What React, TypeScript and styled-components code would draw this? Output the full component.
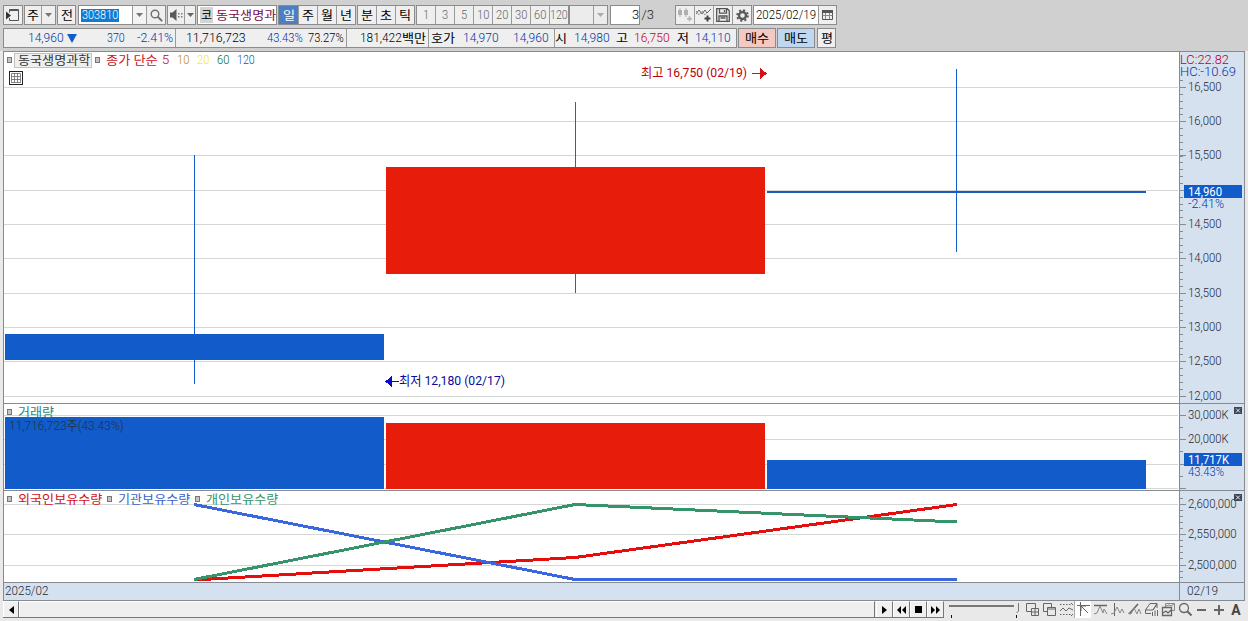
import React, { useLayoutEffect, useRef, useState } from 'react';
import styled, { createGlobalStyle } from 'styled-components';

const FONT = `Roboto, "Noto Sans CJK KR", sans-serif`;
const HANGUL = `"Noto Sans CJK KR", sans-serif`;
const BLUE = '#115bcb';
const RED = '#e81c0a';

const Global = createGlobalStyle`
  * { box-sizing: border-box; }
  body { margin: 0; background: #e9e9e9; overflow: hidden; font-family: ${FONT}; font-size: 13px; font-weight: 350; color: #000; }
  svg { display: block; flex: none; }
`;

/* ---------- text set to a fixed column width ---------- */
const FitBox = styled.span<{ $w: number; $gap: number; $color?: string; $size: number; $ko?: boolean }>`
  display: block;
  flex: none;
  width: ${p => p.$w}px;
  margin-left: ${p => p.$gap}px;
  color: ${p => p.$color ?? 'inherit'};
  font-family: ${p => (p.$ko ? HANGUL : FONT)};
  font-size: ${p => p.$size}px;
  font-weight: ${p => (p.$ko ? 400 : 350)};
  line-height: 16px;
  white-space: nowrap;
`;
const FitInner = styled.span`
  display: inline-block;
  height: 16px;
  vertical-align: top;
  transform-origin: 0 50%;
`;
type FitProps = { w: number; gap?: number; color?: string; size?: number; ko?: boolean; children: string };
function Fit({ w, gap = 0, color, size, ko, children }: FitProps) {
  const ref = useRef<HTMLSpanElement>(null);
  const [scale, setScale] = useState(1);
  useLayoutEffect(() => {
    if (ref.current) setScale(w / ref.current.offsetWidth);
  }, [w, children]);
  return (
    <FitBox $w={w} $gap={gap} $color={color} $ko={ko} $size={size ?? (ko ? 12 : 13)}>
      <FitInner ref={ref} style={{ transform: `scaleX(${scale})` }}>{children}</FitInner>
    </FitBox>
  );
}

/* ---------- page ---------- */
const Page = styled.div`
  width: 1248px;
  height: 621px;
  display: flex;
  flex-direction: column;
  background: #e9e9e9;
`;
const Header = styled.header`
  height: 51px;
  flex: none;
  padding: 5px 0 0 3px;
  background: #d0d0d0;
  display: flex;
  flex-direction: column;
  gap: 3px;
`;
const Bar = styled.div`
  display: flex;
  height: 20px;
`;
const Group = styled.div<{ $gap?: number }>`
  display: flex;
  margin-left: ${p => p.$gap ?? 1}px;
  border: 1px solid #8c8c8c;
  background: #efefef;
  height: 20px;
`;
const Cell = styled.div<{ $w: number; $bg?: string; $color?: string; $line?: boolean; $align?: string }>`
  width: ${p => p.$w}px;
  flex: none;
  height: 18px;
  display: flex;
  align-items: center;
  justify-content: ${p => p.$align ?? 'center'};
  background: ${p => p.$bg ?? 'transparent'};
  color: ${p => p.$color ?? 'inherit'};
  border-left: ${p => (p.$line ? '1px solid #9a9a9a' : '0')};
  overflow: hidden;
`;
const PageTotal = styled.div`
  width: 15px;
  height: 20px;
  display: flex;
  align-items: center;
  justify-content: center;
`;
const CodeTag = styled.span`
  display: flex;
  justify-content: center;
  width: 13px;
  height: 16px;
  margin-left: 2px;
  background: #d4d4d4;
`;
const Selected = styled.span`
  display: flex;
  align-items: center;
  height: 13px;
  width: 38px;
  background: #0f7bd6;
  margin-left: 2px;
`;

const Caret = ({ color = '#777' }: { color?: string }) => (
  <svg width="7" height="4"><path d="M0 0h7L3.5 4z" fill={color} /></svg>
);

/* ---------- toolbar icons ---------- */
const WindowIcon = () => (
  <svg width="14" height="14" fill="none" stroke="#555">
    <path d="M3.5 1.5h9v11h-9M3.5 1.5v3M3.5 10v2.5" /><path d="M3.5 2.5h9" />
    <path d="M0 3.5l5 4-5 4z" fill="#333" stroke="none" />
  </svg>
);
const SearchIcon = () => (
  <svg width="13" height="13" viewBox="0 0 13 13" fill="none" stroke="#707070" strokeWidth="1.4">
    <circle cx="5" cy="5" r="3.8" /><path d="M7.8 7.8l4.3 4.3" strokeWidth="2" />
  </svg>
);
const SpeakerIcon = () => (
  <svg width="13" height="12">
    <path d="M0 3.500h2.500L6.500 0v12L2.500 8.500H0z" fill="#5a5a5a" />
    <path d="M8 4h1.500v1.500H8zM11 4h1.500v1.500H11zM8 7h1.500v1.500H8zM11 7h1.500v1.500H11z" fill="#777" />
  </svg>
);
const CandlesAddIcon = () => (
  <svg width="16" height="14" fill="#b0b0b0">
    <path d="M1 2h4v5H1zM2.500 0h1v9h-1zM7 2h4v5H7zM8.500 0h1v9h-1zM10 10h5v1.6h-5zM11.7 8.3h1.6v5h-1.6z" />
  </svg>
);
const LineAddIcon = () => (
  <svg width="16" height="14" fill="none" stroke="#666">
    <path d="M0 6l3-4 3 4 3-4 2 3 4-4" /><path d="M0 3l3 4 3-4 3 4 3-3" strokeDasharray="1 1" />
    <path d="M8.5 10.5h6M11.5 7.5v6" strokeWidth="2" stroke="#444" />
  </svg>
);
const SaveIcon = () => (
  <svg width="14" height="14" fill="none" stroke="#555" strokeWidth="1.3">
    <path d="M.7.7h10.5l2.1 2.1v10.5H.7zM3.5.7v4.5h7V.7M3 13.3V8h8v5.3M8.5 2v2M4.5 10h5" />
  </svg>
);
const GearIcon = () => (
  <svg width="13" height="13" fill="none" stroke="#5a5a5a">
    <circle cx="6.5" cy="6.5" r="3.5" strokeWidth="2.4" />
    <circle cx="6.5" cy="6.5" r="5.4" strokeWidth="1.8" strokeDasharray="2.1 2.14" />
  </svg>
);
const CalendarIcon = () => (
  <svg width="11" height="10" fill="none" stroke="#555">
    <path d="M.5.5h10v9H.5z" /><path d="M.5 5.500h10M3.500 2v7M7.500 2v7" stroke="#888" /><path d="M0 1.500h11" strokeWidth="3" />
  </svg>
);

const periods: [string, boolean][] = [['일', true], ['주', false], ['월', false], ['년', false]];
const units = ['분', '초', '틱'];
const steps: [string, number][] = [['1', 18], ['3', 19], ['5', 19], ['10', 19], ['20', 19], ['30', 19], ['60', 19], ['120', 19]];

function Toolbar() {
  return (
    <Bar>
      <Group $gap={0}><Cell $w={18}><WindowIcon /></Cell></Group>
      <Group $gap={1}>
        <Cell $w={16}><Fit w={12} ko>주</Fit></Cell>
        <Cell $w={14} $line><Caret /></Cell>
      </Group>
      <Group $gap={1}><Cell $w={17}><Fit w={12} ko>전</Fit></Cell></Group>
      <Group $gap={2}>
        <Cell $w={53} $bg="#fff" $align="flex-start">
          <Selected><Fit w={36} gap={1} color="#fff">303810</Fit></Selected>
        </Cell>
        <Cell $w={14} $line $bg="#f4f4f4"><Caret /></Cell>
        <Cell $w={19} $line><SearchIcon /></Cell>
      </Group>
      <Group $gap={1}>
        <Cell $w={16}><SpeakerIcon /></Cell>
        <Cell $w={11} $line><Caret color="#666" /></Cell>
      </Group>
      <Group $gap={1}>
        <Cell $w={78} $bg="#fff" $align="flex-start">
          <CodeTag><Fit w={11} ko>코</Fit></CodeTag>
          <Fit w={60} gap={3} ko color="#7a0a44">동국생명과</Fit>
        </Cell>
      </Group>
      <Group $gap={1}>
        {periods.map(([t, on], i) => (
          <Cell key={t} $w={19} $line={i > 0} $bg={on ? '#4a7fc4' : undefined} $color={on ? '#fff' : undefined}>
            <Fit w={12} ko>{t}</Fit>
          </Cell>
        ))}
      </Group>
      <Group $gap={1}>
        {units.map((t, i) => <Cell key={t} $w={i ? 19 : 18} $line={i > 0}><Fit w={12} ko>{t}</Fit></Cell>)}
      </Group>
      <Group $gap={1}>
        {steps.map(([t, w], i) => (
          <Cell key={t} $w={w} $line={i > 0} $color="#666"><Fit w={t.length * 6}>{t}</Fit></Cell>
        ))}
      </Group>
      <Group $gap={0}>
        <Cell $w={23} $bg="#ececec" /><Cell $w={14} $line $bg="#ececec"><Caret color="#aaa" /></Cell>
      </Group>
      <Group $gap={2}>
        <Cell $w={28} $bg="#fff" $align="flex-end"><Fit w={7}>3</Fit></Cell>
      </Group>
      <PageTotal><Fit w={12} color="#222">/3</Fit></PageTotal>
      <Group $gap={20}>
        <Cell $w={18}><CandlesAddIcon /></Cell>
        <Cell $w={19} $line><LineAddIcon /></Cell>
        <Cell $w={19} $line><SaveIcon /></Cell>
        <Cell $w={19} $line><GearIcon /></Cell>
      </Group>
      <Group $gap={1}>
        <Cell $w={64} $bg="#fff"><Fit w={60}>2025/02/19</Fit></Cell>
        <Cell $w={18} $line><CalendarIcon /></Cell>
      </Group>
    </Bar>
  );
}

const QBLUE = '#0235a8';
function QuoteBar() {
  return (
    <Bar>
      <Group $gap={0}>
        <Cell $w={171} $align="flex-start" $color={QBLUE}>
          <Fit w={36} gap={24}>14,960</Fit>
          <svg width="13" height="9"><path d="M3 0h10L8 9z" fill={BLUE} /></svg>
          <Fit w={18} gap={30}>370</Fit>
          <Fit w={36} gap={12}>-2.41%</Fit>
        </Cell>
        <Cell $w={171} $line $align="flex-start">
          <Fit w={60} gap={10}>11,716,723</Fit>
          <Fit w={36} gap={21} color={QBLUE}>43.43%</Fit>
          <Fit w={36} gap={5}>73.27%</Fit>
        </Cell>
        <Cell $w={82} $line $align="flex-start">
          <Fit w={42} gap={13}>181,422</Fit><Fit w={24} ko>백만</Fit>
        </Cell>
        <Cell $w={126} $line $align="flex-start">
          <Fit w={24} gap={2} ko>호가</Fit>
          <Fit w={36} gap={8} color={QBLUE}>14,970</Fit>
          <Fit w={36} gap={14} color={QBLUE}>14,960</Fit>
        </Cell>
        <Cell $w={182} $line $align="flex-start" $color={QBLUE}>
          <Fit w={12} gap={0} ko color="#000">시</Fit>
          <Fit w={36} gap={7}>14,980</Fit>
          <Fit w={12} gap={6} ko color="#000">고</Fit>
          <Fit w={36} gap={6} color="#c00008">16,750</Fit>
          <Fit w={12} gap={7} ko color="#000">저</Fit>
          <Fit w={36} gap={6}>14,110</Fit>
        </Cell>
      </Group>
      <Group $gap={1}><Cell $w={36} $bg="#f3c9c3"><Fit w={24} ko>매수</Fit></Cell></Group>
      <Group $gap={1}><Cell $w={36} $bg="#bfd7f1"><Fit w={24} ko>매도</Fit></Cell></Group>
      <Group $gap={2}><Cell $w={17}><Fit w={12} ko>평</Fit></Cell></Group>
    </Bar>
  );
}

/* ---------- chart ---------- */
const Chart = styled.main`
  width: 1242px;
  margin-left: 3px;
  flex: none;
  border: 1px solid #858b90;
  border-bottom-width: 0;
  display: flex;
  flex-direction: column;
`;
const Panel = styled.section<{ $h: number }>`
  position: relative;
  display: flex;
  height: ${p => p.$h}px;
  border-bottom: 1px solid #858b90;
`;
const Plot = styled.div`
  width: 1175px;
  background: #fff;
`;
const Axis = styled.div`
  width: 65px;
  background: #d6e1ef;
  border-left: 1px solid #858b90;
`;
const Legend = styled.div`
  position: absolute;
  left: 3px;
  top: 0;
  display: flex;
  align-items: center;
  height: 16px;
`;
const Mark = styled.i<{ $gap?: number }>`
  width: 5px;
  height: 6px;
  margin-left: ${p => p.$gap ?? 0}px;
  border: 1px solid #777;
  background: #c4c4c4;
`;
const NameTag = styled.div`
  display: flex;
  align-items: center;
  width: 78px;
  height: 15px;
  margin-left: 2px;
  border: 1px solid #c2c2c2;
  background: #efefef;
`;
const GridButton = styled.div`
  position: absolute;
  left: 5px;
  top: 19px;
  width: 14px;
  height: 14px;
  border: 1px solid #222;
  background: #fff;
  display: flex;
  align-items: center;
  justify-content: center;
`;
const VolumeNote = styled.div`
  position: absolute;
  left: 5px;
  top: 14px;
`;

type Tick = { y: number; label?: string };
type AxisProps = { h: number; top: number; ticks: Tick[]; minors: number[]; last?: { y: number; text: string; pct: string; w: number }; close?: number; children?: React.ReactNode };
const widthOf = (s: string) => [...s].reduce((n, c) => n + (c === ',' ? 3 : c === 'K' ? 7 : 6.1), 0);

function SvgText({ x, y, w, color = '#222932', weight = 350, children }: { x: number; y: number; w: number; color?: string; weight?: number; children: string }) {
  return <text x={x} y={y} fill={color} fontFamily={FONT} fontSize="13" fontWeight={weight} textLength={w} lengthAdjust="spacingAndGlyphs">{children}</text>;
}
function Scale({ h, top, ticks, minors, last, close, children }: AxisProps) {
  return (
    <Axis>
      <svg width="64" height={h} viewBox={`1180 ${top} 64 ${h}`}>
        {minors.map(y => <path key={y} d={`M1180 ${y + 0.5}h3`} stroke="#858b90" />)}
        {ticks.map(t => (
          <g key={t.y}>
            <path d={`M1180 ${t.y + 0.5}h6`} stroke="#858b90" />
            {t.label && <SvgText x={1188} y={t.y + 4} w={widthOf(t.label)}>{t.label}</SvgText>}
          </g>
        ))}
        {last && (
          <g>
            <rect x="1184" y={last.y} width="58" height="13" fill={BLUE} />
            <SvgText x={1188} y={last.y + 11} w={last.w} color="#fff" weight={400}>{last.text}</SvgText>
            <SvgText x={1188} y={last.y + 23} w={36} color="#0235a8">{last.pct}</SvgText>
          </g>
        )}
        {close && (
          <g>
            <rect x="1234" y={close} width="8" height="7" fill="#3d4550" />
            <path d={`M1236 ${close + 1.5}l4 4m0-4l-4 4`} stroke="#e8eef5" />
          </g>
        )}
        {children}
      </svg>
    </Axis>
  );
}
const Lines = ({ ys }: { ys: number[] }) => (
  <>{ys.map(y => <path key={y} d={`M4 ${y + 0.5}h1174`} stroke="#d4d8d4" />)}</>
);

const priceYs = [87, 121, 155, 190, 224, 258, 293, 327, 361, 396];
const priceTicks = priceYs.map((y, i) => ({ y, label: `${(16500 - i * 500).toLocaleString('en-US')}` }));
const priceMinors = Array.from({ length: 50 }, (_, i) => Math.round(59.5 + i * 6.86)).filter(y => y > 78 && y < 400);

function PricePanel() {
  return (
    <Panel $h={352}>
      <Plot>
        <svg width="1175" height="351" viewBox="4 52 1175 351" shapeRendering="crispEdges">
          <Lines ys={priceYs} />
          <rect x="194" y="155" width="1" height="229" fill={BLUE} />
          <rect x="5" y="334" width="379" height="26" fill={BLUE} />
          <rect x="575" y="102" width="1" height="191" fill="#cf2a1c" />
          <rect x="386" y="167" width="379" height="107" fill={RED} />
          <rect x="956" y="69" width="1" height="183" fill={BLUE} />
          <rect x="767" y="191" width="379" height="2" fill="#1f5abb" />
          <SvgText x={641} y={77} w={106} color="#c00008" weight={400}>최고 16,750 (02/19)</SvgText>
          <path d="M752 73h8v-5l7 5.500-7 5.500v-5h-8z" fill="#d80f12" />
          <SvgText x={399} y={385} w={106} color="#0a0a9c" weight={400}>최저 12,180 (02/17)</SvgText>
          <path d="M399 381h-7v-5l-7 5.500 7 5.500v-5h7z" fill="#0a0ad0" />
        </svg>
      </Plot>
      <Scale h={351} top={52} ticks={priceTicks} minors={priceMinors} last={{ y: 185, text: '14,960', pct: '-2.41%', w: 34 }}>
        <SvgText x={1180} y={64} w={49} color="#c00008">LC:22.82</SvgText>
        <SvgText x={1180} y={76} w={56} color="#0235a8">HC:-10.69</SvgText>
      </Scale>
      <Legend>
        <Mark />
        <NameTag><Fit w={72} gap={3} ko color="#333">동국생명과학</Fit></NameTag>
        <Mark $gap={3} />
        <Fit w={52} gap={6} ko color="#c8141e">종가 단순</Fit>
        <Fit w={7} gap={4} color="#c00008">5</Fit>
        <Fit w={12} gap={8} color="#b98a00">10</Fit>
        <Fit w={12} gap={8} color="#f4ea10">20</Fit>
        <Fit w={12} gap={8} color="#006e2a">60</Fit>
        <Fit w={18} gap={8} color="#1450a6">120</Fit>
      </Legend>
      <GridButton>
        <svg width="10" height="10" stroke="#666" fill="none"><path d="M.5.5h9v9h-9zM.5 3.5h9M.5 6.5h9M3.5.5v9M6.5.5v9" strokeWidth=".8" /></svg>
      </GridButton>
    </Panel>
  );
}

function VolumePanel() {
  return (
    <Panel $h={87}>
      <Plot>
        <svg width="1175" height="86" viewBox="4 404 1175 86" shapeRendering="crispEdges">
          <Lines ys={[415, 439, 464, 488]} />
          <rect x="5" y="417" width="379" height="72" fill={BLUE} />
          <rect x="386" y="423" width="379" height="66" fill={RED} />
          <rect x="767" y="460" width="379" height="29" fill={BLUE} />
        </svg>
      </Plot>
      <Scale h={86} top={404} close={407} minors={[427, 451, 476]}
        ticks={[{ y: 415, label: '30,000K' }, { y: 439, label: '20,000K' }, { y: 464 }, { y: 488 }]}
        last={{ y: 453, text: '11,717K', pct: '43.43%', w: 41 }} />
      <Legend>
        <Mark /><Fit w={36} gap={6} ko color="#2b8579">거래량</Fit>
      </Legend>
      <VolumeNote><Fit w={115} color="#26303f">11,716,723주(43.43%)</Fit></VolumeNote>
    </Panel>
  );
}

function HoldingsPanel() {
  return (
    <Panel $h={92}>
      <Plot>
        <svg width="1175" height="91" viewBox="4 491 1175 91" fill="none" strokeWidth="3" shapeRendering="crispEdges">
          <g strokeWidth="1"><Lines ys={[504, 534, 565]} /></g>
          <path d="M194 580L575 557.5L957 504.5" stroke="#e60d0d" />
          <path d="M194 504.5L575 579.5H957" stroke="#3a66e0" />
          <path d="M194 579.5L575 504.5L957 522" stroke="#36946a" />
        </svg>
      </Plot>
      <Scale h={91} top={491} close={494} minors={[498, 510, 516, 522, 528, 540, 546, 552, 558, 571, 577]}
        ticks={[{ y: 504, label: '2,600,000' }, { y: 534, label: '2,550,000' }, { y: 565, label: '2,500,000' }]} />
      <Legend>
        <Mark /><Fit w={84} gap={6} ko color="#d01018">외국인보유수량</Fit>
        <Mark $gap={5} /><Fit w={72} gap={6} ko color="#3a62cc">기관보유수량</Fit>
        <Mark $gap={5} /><Fit w={72} gap={6} ko color="#36946a">개인보유수량</Fit>
      </Legend>
    </Panel>
  );
}

const DateRow = styled.div`
  display: flex;
  height: 18px;
  background: #d6e1ef;
  border-bottom: 1px solid #858b90;
`;
const DateStart = styled.div`
  width: 1175px;
`;
const DateEnd = styled.div`
  flex: 1;
  border-left: 1px solid #858b90;
`;

/* ---------- footer ---------- */
const Footer = styled.footer`
  display: flex;
  height: 20px;
  padding-left: 3px;
`;
const Scroll = styled.div`
  display: flex;
  width: 941px;
  height: 17px;
  border-bottom: 1px solid #777;
`;
const ScrollBtn = styled.div<{ $w: number }>`
  width: ${p => p.$w}px;
  display: flex;
  align-items: center;
  justify-content: center;
  background: #f0f0f0;
  border-right: 1px solid #777;
  border-left: 1px solid #fff;
  border-top: 1px solid #fff;
`;
const Thumb = styled.div`
  width: 856px;
  margin-right: 1px;
  background: #efefef;
  border: 1px solid #fff;
  border-right-color: #777;
  border-bottom: 0;
`;
const Tools = styled.div`
  display: flex;
  align-items: center;
  height: 17px;
`;
const Tool = styled.div<{ $on?: boolean }>`
  width: 17px;
  height: 17px;
  display: flex;
  align-items: center;
  justify-content: center;
  background: ${p => (p.$on ? '#fff' : 'transparent')};
  border-left: 1px solid ${p => (p.$on ? '#aaa' : 'transparent')};
`;
const tools: [React.ReactNode, boolean?][] = [
  [<><path d="M6 9.5H1.5v-8h9V6" /><path d="M6.5 6.5h7v7h-7zM10 6.5v7M6.5 10h7" /></>],
  [<><path d="M5 9.5H1.5v-8h8V5" /><path d="M5.5 5.500h8v8h-8zM5.5 7h8" /></>],
  [<><path d="M1 2.5h13M1 12.5h13" strokeDasharray="1.5 1.5" /><path d="M1 9l3-3 3 3 3-3 4 2M12 1l2 2M12 14l2-2" /></>],
  [<><path d="M1 3.5h13M4.5 0v14M5 4l7 7M5 9V4h5" /></>, true],
  [<><path d="M1 3.5h13" strokeWidth="1.5" /><path d="M1 12l3-1 3-7 3 7 1-4 3 5" stroke="#888" /></>],
  [<><path d="M4.5 1v13" /><path d="M1 12l3-1 3-6 3 6 2-4 2 4" stroke="#888" /></>],
  [<><path d="M2 12L11 2" strokeWidth="1.6" /><path d="M1 11l3 1 3-6 3 6 2-5 2 5" stroke="#888" /></>],
  [<><path d="M1.500 8l4.500-6.500h7L9 8zM1.500 8v3.500H7M9 8l4-6v4" /><path d="M8.500 10v4M11 8.500V14M13.500 8v6" /></>],
  [<><path d="M4.500 5V1.500h9v7H11M5 4l3-1 2 1 3-2" stroke="#888" /><path d="M1.500 5.500h9v8h-9zM2 11l3-2 2 2 3-3" strokeWidth="1.300" /></>],
  [<><circle cx="6" cy="6" r="4.500" strokeWidth="1.300" /><path d="M9 9l4.500 4.500" strokeWidth="2" /></>],
  [<path d="M2 8h9" strokeWidth="2" />],
  [<path d="M2 8h10M7 3v10" strokeWidth="2" />],
];
const LetterTool = styled(Tool)`
  font-weight: 700;
  font-size: 14px;
  color: #444;
`;

export default function App() {
  return (
    <Page>
      <Global />
      <Header>
        <Toolbar />
        <QuoteBar />
      </Header>
      <Chart>
        <PricePanel />
        <VolumePanel />
        <HoldingsPanel />
        <DateRow>
          <DateStart><Fit w={43} gap={1} color="#222932">2025/02</Fit></DateStart>
          <DateEnd><Fit w={31} gap={7} color="#222932">02/19</Fit></DateEnd>
        </DateRow>
      </Chart>
      <Footer>
        <Scroll>
          <ScrollBtn $w={16}><svg width="5" height="8"><path d="M5 0v8L0 4z" /></svg></ScrollBtn>
          <Thumb />
          <ScrollBtn $w={17}><svg width="5" height="8"><path d="M0 0v8l5-4z" /></svg></ScrollBtn>
          <ScrollBtn $w={17}><svg width="9" height="8"><path d="M4 0v8L0 4zM9 0v8L5 4z" /></svg></ScrollBtn>
          <ScrollBtn $w={17}><svg width="7" height="7"><path d="M0 0h7v7H0z" /></svg></ScrollBtn>
          <ScrollBtn $w={17}><svg width="9" height="8"><path d="M0 0v8l4-4zM5 0v8l4-4z" /></svg></ScrollBtn>
        </Scroll>
        <svg width="79" height="20" viewBox="944 601 79 20" fill="none">
          <path d="M949 606h65" stroke="#777" strokeWidth="2" />
          <path d="M1018.500 603v8l-2 2" stroke="#777" /><path d="M951.500 615v3M1016.500 615v3" stroke="#111" />
        </svg>
        <Tools>
          {tools.map(([shape, on], i) => (
            <Tool key={i} $on={on}><svg width="15" height="15" fill="none" stroke="#666">{shape}</svg></Tool>
          ))}
          <LetterTool>A</LetterTool>
        </Tools>
      </Footer>
    </Page>
  );
}
